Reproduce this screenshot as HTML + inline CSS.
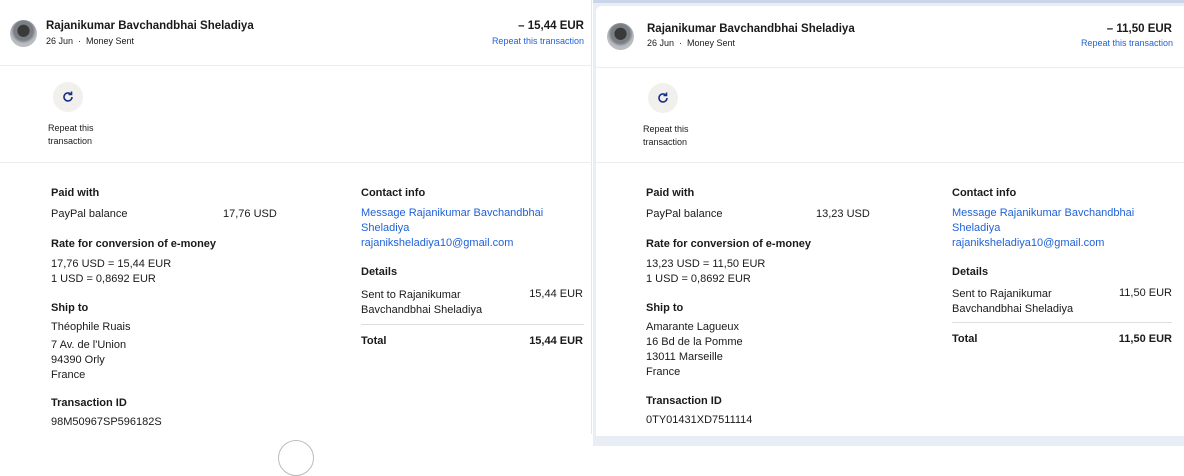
<!DOCTYPE html><html><head><style>
*{margin:0;padding:0;box-sizing:border-box}
body{width:1184px;height:446px;overflow:hidden;background:#fff;font-family:"Liberation Sans",sans-serif;color:#1a1a1a;position:relative;font-size:11px}
.a{position:absolute;white-space:nowrap}
.b{font-weight:bold}
.l{color:#1f62d8}
.g{color:#222}
.p{position:absolute;background:#fff}
.hr{position:absolute;height:1px;background:#ececec}
.av{position:absolute;width:27px;height:27px;border-radius:50%;background:radial-gradient(circle at 50% 40%,#3a3a3a 0 28%,#7a7f85 30% 45%,#b9bcc0 60%)}
.rc{position:absolute;width:30px;height:30px;border-radius:50%;background:#f1f0ec}
.rc svg{position:absolute;left:8px;top:8px}
</style></head><body>
<div class="p" style="left:0;top:0;width:592px;height:434px;border-right:1px solid #e6e6e6"></div>
<div class="p" style="left:593px;top:0;width:591px;height:446px;background:#e9eef6"></div>
<div class="p" style="left:596px;top:6px;width:588px;height:430px;border-radius:6px 0 0 0"></div>
<div class="p" style="left:593px;top:0;width:591px;height:3px;background:#c9d5e8"></div>
<div class="p" style="left:0;top:434px;width:593px;height:12px;background:#fff"></div>
<div class="a" style="left:278px;top:440px;width:36px;height:36px;border-radius:50%;border:1px solid #bbb"></div>

<!-- left -->
<div class="av" style="left:10px;top:20px"></div>
<div class="a b" style="left:46px;top:20px;font-size:11.5px">Rajanikumar Bavchandbhai Sheladiya</div>
<div class="a" style="left:46px;top:36px;font-size:9px">26 Jun &nbsp;·&nbsp; Money Sent</div>
<div class="a b" style="right:600px;top:20px;font-size:11.5px">– 15,44 EUR</div>
<div class="a l" style="right:600px;top:36px;font-size:9px">Repeat this transaction</div>
<div class="hr" style="left:0;top:65px;width:592px"></div>
<div class="rc" style="left:53px;top:82px"><svg width="14" height="14" viewBox="0 0 14 14"><path d="M11 7a4 4 0 1 1-1.3-3" fill="none" stroke="#1b2f8a" stroke-width="1.6"/><path d="M10.5 1.5v3h-3" fill="none" stroke="#1b2f8a" stroke-width="1.6"/></svg></div>
<div class="a" style="left:48px;top:122px;font-size:9px;line-height:13px">Repeat this<br>transaction</div>
<div class="hr" style="left:0;top:162px;width:592px"></div>

<div class="a b" style="left:51px;top:187px">Paid with</div>
<div class="a" style="left:51px;top:208px">PayPal balance</div>
<div class="a" style="left:223px;top:208px">17,76 USD</div>
<div class="a b" style="left:51px;top:238px">Rate for conversion of e-money</div>
<div class="a" style="left:51px;top:257px;line-height:15px">17,76 USD = 15,44 EUR<br>1 USD = 0,8692 EUR</div>
<div class="a b" style="left:51px;top:302px">Ship to</div>
<div class="a" style="left:51px;top:321px">Théophile Ruais</div>
<div class="a" style="left:51px;top:338px;line-height:15px">7 Av. de l'Union<br>94390 Orly<br>France</div>
<div class="a b" style="left:51px;top:397px">Transaction ID</div>
<div class="a" style="left:51px;top:416px">98M50967SP596182S</div>

<div class="a b" style="left:361px;top:187px">Contact info</div>
<div class="a l" style="left:361px;top:206px;line-height:15px">Message Rajanikumar Bavchandbhai<br>Sheladiya<br>rajaniksheladiya10@gmail.com</div>
<div class="a b" style="left:361px;top:266px">Details</div>
<div class="a" style="left:361px;top:288px;line-height:15px">Sent to Rajanikumar<br>Bavchandbhai Sheladiya</div>
<div class="a" style="right:601px;top:288px">15,44 EUR</div>
<div class="hr" style="left:361px;top:324px;width:223px;background:#ddd"></div>
<div class="a b" style="left:361px;top:335px">Total</div>
<div class="a b" style="right:601px;top:335px">15,44 EUR</div>

<!-- right -->
<div class="av" style="left:607px;top:23px"></div>
<div class="a b" style="left:647px;top:23px;font-size:11.5px">Rajanikumar Bavchandbhai Sheladiya</div>
<div class="a" style="left:647px;top:38px;font-size:9px">26 Jun &nbsp;·&nbsp; Money Sent</div>
<div class="a b" style="right:12px;top:23px;font-size:11.5px">– 11,50 EUR</div>
<div class="a l" style="right:11px;top:38px;font-size:9px">Repeat this transaction</div>
<div class="hr" style="left:596px;top:67px;width:588px"></div>
<div class="rc" style="left:648px;top:83px"><svg width="14" height="14" viewBox="0 0 14 14"><path d="M11 7a4 4 0 1 1-1.3-3" fill="none" stroke="#1b2f8a" stroke-width="1.6"/><path d="M10.5 1.5v3h-3" fill="none" stroke="#1b2f8a" stroke-width="1.6"/></svg></div>
<div class="a" style="left:643px;top:123px;font-size:9px;line-height:13px">Repeat this<br>transaction</div>
<div class="hr" style="left:596px;top:162px;width:588px"></div>

<div class="a b" style="left:646px;top:187px">Paid with</div>
<div class="a" style="left:646px;top:208px">PayPal balance</div>
<div class="a" style="left:816px;top:208px">13,23 USD</div>
<div class="a b" style="left:646px;top:238px">Rate for conversion of e-money</div>
<div class="a" style="left:646px;top:257px;line-height:15px">13,23 USD = 11,50 EUR<br>1 USD = 0,8692 EUR</div>
<div class="a b" style="left:646px;top:302px">Ship to</div>
<div class="a" style="left:646px;top:320px;line-height:15px">Amarante Lagueux<br>16 Bd de la Pomme<br>13011 Marseille<br>France</div>
<div class="a b" style="left:646px;top:395px">Transaction ID</div>
<div class="a" style="left:646px;top:414px">0TY01431XD7511114</div>

<div class="a b" style="left:952px;top:187px">Contact info</div>
<div class="a l" style="left:952px;top:206px;line-height:15px">Message Rajanikumar Bavchandbhai<br>Sheladiya<br>rajaniksheladiya10@gmail.com</div>
<div class="a b" style="left:952px;top:266px">Details</div>
<div class="a" style="left:952px;top:287px;line-height:15px">Sent to Rajanikumar<br>Bavchandbhai Sheladiya</div>
<div class="a" style="right:12px;top:287px">11,50 EUR</div>
<div class="hr" style="left:952px;top:322px;width:220px;background:#ddd"></div>
<div class="a b" style="left:952px;top:333px">Total</div>
<div class="a b" style="right:12px;top:333px">11,50 EUR</div>
</body></html>
